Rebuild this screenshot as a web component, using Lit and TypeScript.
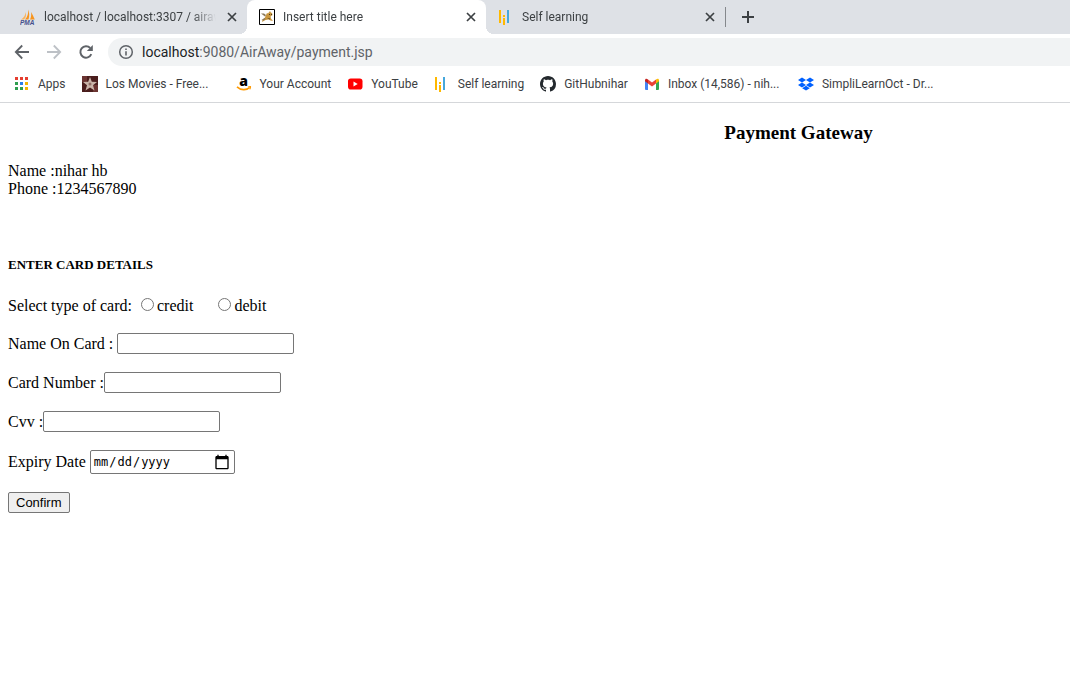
import { LitElement, html, css, svg } from "lit";
import { customElement } from "lit/decorators.js";
import { classMap } from "lit/directives/class-map.js";

const bars = svg`<path fill="#ffb900" d="M1 1h2v13H1zM5 9h2v7H5zM5 6h2v2H5z"/><path fill="#46a8dc" d="M9 1h2v13H9z"/>`;

const icons: Record<string, unknown> = {
  pma: svg`<path fill="#f7941d" d="M8.200 0.500C9.500 4 9.500 7 8.500 10.500H5C7.500 8 8.500 4.500 8.200.5zM11 3c1.500 2 2.500 5 3.800 7.500H10C11.200 8 11.500 5.500 11 3z"/><path fill="#fbb35a" d="M5.500 3C5.500 6 4 8.500 1 10.500h3C6 8.500 6.500 6 5.500 3z"/><text x="0" y="15.500" font-family="Liberation Sans" font-size="6.500" font-weight="700" font-style="italic" fill="#45508c">PMA</text>`,
  tomcat: svg`<path fill="#fff" stroke="#000" d="M.5.500h15v15H.5z"/><path fill="#c9973f" d="M8 4l1 .5 2-2.500.8 1.500 1.200.5.500 2-2 1.500.5 2 2 2.500-2.500-.5-2-1-3 .5-3.500 2 .5-2 2.500-2.500L6.500 7z"/><path fill="#8a7a5c" d="M2 4.500l3 0 2 1.500-1 1.500-2-1.500zM2.500 11l3-2 1 1-2 1.500z"/><path fill="#4d3a1c" d="M10 5h1v1h-1zM12 5h1v1h-1zM8 9l3 .5v1z"/>`,
  learn: bars,
  apps: svg`<path fill="#e53e30" d="M1 1h3v3H1zM6 1h3v3H6zM11 1h3v3h-3z"/><path fill="#2f9e4f" d="M1 6h3v3H1zM1 11h3v3H1zM6 11h3v3H6z"/><path fill="#2b7de9" d="M6 6h3v3H6z"/><path fill="#f5b400" d="M11 6h3v3h-3zM11 11h3v3h-3z"/>`,
  movies: svg`<path fill="#4a1d1c" d="M0 0h16v16H0z"/><path fill="#6b3431" d="M0 0h5v6H0zM11 9h5v7h-5z"/><path fill="#c9b3a8" d="M8 1l1.800 4.800 5.200.2-4 3.300 1.500 5.200L8 11.500l-4.500 3L5 9.300 1 6l5.200-.2z"/><circle cx="8" cy="8" r="1.500" fill="#8d6c64"/>`,
  amazon: svg`<text x="7.500" y="10" text-anchor="middle" font-family="Open Sans" font-size="14" font-weight="800" fill="#000">a</text><path fill="none" stroke="#f90" stroke-width="1.600" d="M1 10.800c4 3.700 9.500 3.500 12.500.8"/><path fill="#f90" d="M11.500 10.300l3.500-.3c.300 1.500-.3 3-1.200 4l-.3-2.400z"/>`,
  youtube: svg`<rect x="1" y="2.500" width="14.500" height="11" rx="2.800" fill="#f00"/><path fill="#fff" d="M6.500 5.500v5l4.200-2.500z"/>`,
  github: svg`<path fill="#24292e" d="M8 0C3.580 0 0 3.580 0 8c0 3.540 2.290 6.530 5.470 7.590.4.070.55-.17.55-.38 0-.19-.01-.82-.01-1.490-2.010.370-2.530-.49-2.690-.94-.09-.23-.48-.94-.82-1.130-.28-.15-.68-.52-.01-.53.63-.01 1.080.580 1.230.820.720 1.210 1.870.870 2.330.660.070-.52.280-.87.510-1.070-1.780-.2-3.640-.89-3.640-3.950 0-.87.310-1.590.820-2.150-.08-.2-.36-1.020.080-2.120 0 0 .67-.21 2.200.820.640-.18 1.320-.27 2-.27s1.360.090 2 .27c1.530-1.040 2.200-.82 2.200-.82.440 1.100.160 1.920.080 2.120.510.560.820 1.270.820 2.150 0 3.070-1.870 3.750-3.650 3.950.290.250.540.730.540 1.480 0 1.070-.01 1.930-.01 2.200 0 .21.150.460.550.380A8.010 8.010 0 0 0 16 8c0-4.420-3.580-8-8-8z"/>`,
  gmail: svg`<path fill="#4285f4" d="M1 4.500l3 2.200V14H2a1 1 0 0 1-1-1z"/><path fill="#34a853" d="M12 6.700l3-2.200V13a1 1 0 0 1-1 1h-2z"/><path fill="#ea4335" d="M4 3.500l4 3 4-3v4L8 10.500l-4-3z"/><path fill="#c5221f" d="M1 4.500c0-2 1.600-2.200 3-1v4L1 5.200z"/><path fill="#fbbc04" d="M15 4.500c0-2-1.600-2.200-3-1v4l3-2.300z"/>`,
  dropbox: svg`<path fill="#0061ff" d="M4 1.500l4 2.500-4 2.500L0 4zM12 1.500l4 2.500-4 2.500L8 4zM4 6.500L8 9l-4 2.500L0 9zM12 6.500L16 9l-4 2.500L8 9zM4.200 12.200L8 9.800l3.800 2.400L8 14.600z"/>`,
  close: svg`<path fill="none" stroke="#3c4043" stroke-width="1.700" d="M4 4l8 8M12 4l-8 8"/>`,
  plus: svg`<path fill="none" stroke="#3c4043" stroke-width="2" d="M8 2v12M2 8h12"/>`,
  back: svg`<path fill="none" stroke="#5f6368" stroke-width="1.800" d="M15 8H2M8.200 1.500L1.800 8l6.400 6.500"/>`,
  forward: svg`<path fill="none" stroke="#bdc1c6" stroke-width="1.800" d="M1 8h13M7.800 1.500L14.200 8l-6.400 6.500"/>`,
  reload: svg`<path fill="none" stroke="#5f6368" stroke-width="2" d="M13.300 10.200A5.700 5.700 0 1 1 12.200 4"/><path fill="#5f6368" d="M14.800 1v6H8.800z"/>`,
  info: svg`<circle cx="8" cy="8" r="6.300" fill="none" stroke="#5f6368" stroke-width="1.500"/><path fill="#5f6368" d="M7.200 7.200h1.600V11.500H7.200zM7.200 4.500h1.600V6H7.200z"/>`,
};

const icon = (name: string) =>
  html`<svg class="icon" viewBox="0 0 16 16" aria-hidden="true">${icons[name]}</svg>`;

const tabs = [
  { icon: "pma", title: "localhost / localhost:3307 / airaw", active: false },
  { icon: "tomcat", title: "Insert title here", active: true },
  { icon: "learn", title: "Self learning", active: false },
];

const bookmarks = [
  { icon: "apps", title: "Apps", clipped: false },
  { icon: "movies", title: "Los Movies - Free...", clipped: true },
  { icon: "amazon", title: "Your Account", clipped: false },
  { icon: "youtube", title: "YouTube", clipped: false },
  { icon: "learn", title: "Self learning", clipped: false },
  { icon: "github", title: "GitHubnihar", clipped: false },
  { icon: "gmail", title: "Inbox (14,586) - nih...", clipped: true },
  { icon: "dropbox", title: "SimpliLearnOct - Dr...", clipped: true },
];

@customElement("browser-chrome")
export class BrowserChrome extends LitElement {
  static styles = css`
    :host {
      display: block;
      font: 12px/16px Roboto, "Noto Sans", sans-serif;
      color: #3c4043;
      border-bottom: 1px solid #d5d7da;
    }
    button {
      display: flex;
      padding: 0;
      border: 0;
      background: none;
    }
    .icon {
      display: block;
      flex: none;
      width: 16px;
      height: 16px;
    }
    .tabs {
      display: flex;
      align-items: center;
      height: 34px;
      padding-left: 8px;
      background: #dee1e6;
      overflow: hidden;
    }
    .tab {
      display: flex;
      align-items: center;
      gap: 8px;
      flex: 0 1 239px;
      min-width: 0;
      box-sizing: border-box;
      height: 34px;
      padding: 0 7px 0 12px;
    }
    .tab.active {
      position: relative;
      background: #fff;
      border-radius: 8px 8px 0 0;
    }
    .tab.active::before,
    .tab.active::after {
      content: "";
      position: absolute;
      bottom: 0;
      width: 8px;
      height: 8px;
    }
    .tab.active::before {
      right: 100%;
      background: radial-gradient(circle at 0 0, transparent 8px, #fff 8px);
    }
    .tab.active::after {
      left: 100%;
      background: radial-gradient(circle at 100% 0, transparent 8px, #fff 8px);
    }
    .title {
      flex: 1;
      min-width: 0;
      overflow: hidden;
      white-space: nowrap;
      mask-image: linear-gradient(to left, transparent, #000 24px);
    }
    .new {
      border-left: 1px solid #85888c;
      padding: 2px 14px;
    }
    .toolbar {
      display: flex;
      align-items: center;
      gap: 16px;
      padding: 4px 0 4px 14px;
    }
    .address {
      display: flex;
      align-items: center;
      gap: 8px;
      flex: 1;
      box-sizing: border-box;
      height: 28px;
      margin-left: -2px;
      padding-left: 10px;
      border-radius: 14px 0 0 14px;
      background: #f1f3f4;
      font-size: 14px;
      line-height: 20px;
      color: #5f6368;
    }
    .host {
      color: #202124;
    }
    .bookmarks {
      display: flex;
      align-items: center;
      gap: 16px;
      height: 32px;
      padding: 0 14px 4px;
      box-sizing: border-box;
    }
    .bookmark {
      display: flex;
      gap: 8px;
      color: inherit;
      text-decoration: none;
      white-space: nowrap;
    }
    .bookmark.clipped {
      width: 138px;
    }
  `;

  render() {
    return html`
      <div class="tabs">
        ${tabs.map(
          (t) => html`<div class=${classMap({ tab: true, active: t.active })}>
            ${icon(t.icon)}<span class="title">${t.title}</span>
            <button aria-label="Close tab">${icon("close")}</button>
          </div>`,
        )}
        <button class="new" aria-label="New tab">${icon("plus")}</button>
      </div>
      <div class="toolbar">
        <button aria-label="Back">${icon("back")}</button>
        <button aria-label="Forward">${icon("forward")}</button>
        <button aria-label="Reload">${icon("reload")}</button>
        <div class="address">
          ${icon("info")}
          <span><span class="host">localhost</span>:9080/AirAway/payment.jsp</span>
        </div>
      </div>
      <nav class="bookmarks">
        ${bookmarks.map(
          (b) => html`<a href="#" class=${classMap({ bookmark: true, clipped: b.clipped })}
            >${icon(b.icon)}<span>${b.title}</span></a
          >`,
        )}
      </nav>
    `;
  }
}

@customElement("payment-page")
export class PaymentPage extends LitElement {
  static styles = css`
    :host {
      display: block;
      padding: 19px 8px;
      font: 16px/18px "Liberation Serif", serif;
      color: #000;
    }
    h3 {
      margin: 0 0 19px 50%;
      font-size: 19px;
      line-height: 21px;
      text-align: center;
    }
    p {
      margin: 0;
    }
    h5 {
      margin: 59px 0 24px;
      font-size: 13px;
      line-height: 16px;
    }
    form {
      display: flex;
      flex-direction: column;
      align-items: flex-start;
      gap: 18px;
    }
    .row {
      display: flex;
      align-items: center;
    }
    .spaced {
      gap: 4px;
    }
    .types,
    .choice {
      display: flex;
      align-items: center;
    }
    .types {
      gap: 25px;
      margin-left: 9px;
    }
    .choice {
      gap: 3px;
    }
    .radio {
      width: 13px;
      height: 13px;
      margin: 0 0 4px;
    }
    .field {
      box-sizing: border-box;
      width: 177px;
      height: 21px;
      padding: 1px 2px;
      border: 1px solid #767676;
      border-radius: 2px;
      background: #fff;
      font: 13px "Liberation Sans", sans-serif;
    }
    .date {
      width: 145px;
      height: 24px;
      padding-right: 4px;
      font: 12px "DejaVu Sans Mono", monospace;
    }
    .date::-webkit-calendar-picker-indicator {
      width: 16px;
      height: 16px;
      padding: 0;
      background-size: 16px 16px;
    }
    .confirm {
      box-sizing: border-box;
      height: 21px;
      padding: 0 7px;
      border: 1px solid #767676;
      border-radius: 2px;
      background: #efefef;
      color: #000;
      font: 13px/19px "Liberation Sans", sans-serif;
    }
  `;

  render() {
    return html`
      <h3>Payment Gateway</h3>
      <p>Name :nihar hb</p>
      <p>Phone :1234567890</p>
      <h5>ENTER CARD DETAILS</h5>
      <form>
        <div class="row">
          <span>Select type of card:</span>
          <div class="types">
            <label class="choice"><input class="radio" type="radio" name="type" value="credit" />credit</label>
            <label class="choice"><input class="radio" type="radio" name="type" value="debit" />debit</label>
          </div>
        </div>
        <div class="row spaced">
          <label for="holder">Name On Card :</label><input class="field" id="holder" type="text" />
        </div>
        <div class="row">
          <label for="number">Card Number :</label><input class="field" id="number" type="text" />
        </div>
        <div class="row">
          <label for="cvv">Cvv :</label><input class="field" id="cvv" type="text" />
        </div>
        <div class="row spaced">
          <label for="expiry">Expiry Date</label><input class="field date" id="expiry" type="date" />
        </div>
        <button class="confirm" type="button">Confirm</button>
      </form>
    `;
  }
}

@customElement("app-root")
export class AppRoot extends LitElement {
  static styles = css`
    :host {
      display: block;
      min-height: 100vh;
      background: #fff;
    }
  `;

  render() {
    return html`<browser-chrome></browser-chrome><payment-page></payment-page>`;
  }
}
